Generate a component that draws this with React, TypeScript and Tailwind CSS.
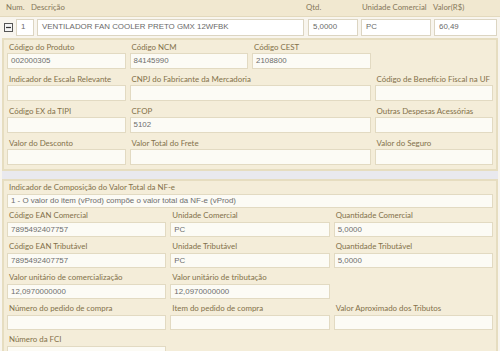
import React from "react";

const LBL = "block h-[12px] leading-[12px] text-[7.9px] text-[#83714a] whitespace-nowrap overflow-hidden pl-[2px]";
const INP = "flex items-center border border-[#e2dac2] bg-[#fcfbf5] pl-[3px] text-[7.9px] text-[#6e6e6e] whitespace-nowrap overflow-hidden";

function F1({ label, value = "", span = "" }: { label: string; value?: string; span?: string }) {
  return (
    <div className={`flex flex-col ${span}`}>
      <span className={LBL} style={{ fontFamily: "Lato, sans-serif" }}>{label}</span>
      <div className={`${INP} h-[16px] mb-[4px]`} style={{ fontFamily: "'Liberation Sans', Arial, sans-serif" }}>{value}</div>
    </div>
  );
}

function F2({ label, value = "", span = "", first = false }: { label: string; value?: string; span?: string; first?: boolean }) {
  return (
    <div className={`flex flex-col ${span}`}>
      <span className={`${LBL} h-[13px] leading-[13px]`} style={{ fontFamily: "Lato, sans-serif" }}>{label}</span>
      <div
        className={`${INP} ${first ? "h-[14px] mb-[1px]" : "h-[15px] mb-[3px]"}`}
        style={{ fontFamily: "'Liberation Sans', Arial, sans-serif" }}
      >
        {value}
      </div>
    </div>
  );
}

function Empty() {
  return <div />;
}

export default function App() {
  const arial = { fontFamily: "'Liberation Sans', Arial, sans-serif" };
  const lato = { fontFamily: "Lato, sans-serif" };
  const rowInp = "h-[17px] flex items-center border border-[#dcd5c2] bg-white pl-[4px] text-[7.9px] text-[#6a6a6a] whitespace-nowrap overflow-hidden";
  return (
    <div className="w-[500px] h-[351px] overflow-hidden bg-[#f8f5ee]">
      {/* header */}
      <div className="flex h-[17px] items-center bg-[#f1e8d0] border-b border-[#e3d9bd] text-[7.8px] text-[#85775a]" style={lato}>
        <span className="w-[31px] pl-[6px]">Num.</span>
        <span className="w-[275px]">Descrição</span>
        <span className="w-[56px]">Qtd.</span>
        <span className="w-[71px]">Unidade Comercial</span>
        <span>Valor(R$)</span>
      </div>
      {/* item row */}
      <div className="flex h-[20px] items-center" style={arial}>
        <div className="w-[16px] flex justify-center pl-[1px]">
          <svg width="9" height="9" viewBox="0 0 9 9">
            <rect x="0.5" y="0.5" width="8" height="8" fill="#f4f4f4" stroke="#555" strokeWidth="1" />
            <line x1="2" y1="4.5" x2="7" y2="4.5" stroke="#333" strokeWidth="1.2" />
          </svg>
        </div>
        <div className={`${rowInp} w-[18px]`}>1</div>
        <div className={`${rowInp} w-[267px] ml-[3px]`}>VENTILADOR FAN COOLER PRETO GMX 12WFBK</div>
        <div className={`${rowInp} w-[50px] ml-[4px]`}>5,0000</div>
        <div className={`${rowInp} w-[70px] ml-[3px]`}>PC</div>
        <div className={`${rowInp} w-[63px] ml-[3px]`}>60,49</div>
      </div>
      {/* panel 1 */}
      <div className="mx-[2px] mt-[1px] border-2 border-[#e6ddc0] bg-[#f4edd9] px-[3px] pt-[1px]">
        <div className="grid grid-cols-4 gap-x-[4px]">
          <F1 label="Código do Produto" value="002000305" />
          <F1 label="Código NCM" value="84145990" />
          <F1 label="Código CEST" value="2108800" />
          <Empty />
          <F1 label="Indicador de Escala Relevante" />
          <F1 label="CNPJ do Fabricante da Mercadoria" span="col-span-2" />
          <F1 label="Código de Benefício Fiscal na UF" />
          <F1 label="Código EX da TIPI" />
          <F1 label="CFOP" value="5102" span="col-span-2" />
          <F1 label="Outras Despesas Acessórias" />
          <F1 label="Valor do Desconto" />
          <F1 label="Valor Total do Frete" span="col-span-2" />
          <F1 label="Valor do Seguro" />
        </div>
      </div>
      <div className="h-[8px] bg-[#e9e9ee] mx-[2px]" />
      {/* panel 2 */}
      <div className="mx-[2px] border-2 border-[#e6ddc0] bg-[#f4edd9] px-[3px] h-[200px]">
        <div className="grid grid-cols-3 gap-x-[4px]">
          <F2 first label="Indicador de Composição do Valor Total da NF-e" value="1 - O valor do item (vProd) compõe o valor total da NF-e (vProd)" span="col-span-3" />
          <F2 label="Código EAN Comercial" value="7895492407757" />
          <F2 label="Unidade Comercial" value="PC" />
          <F2 label="Quantidade Comercial" value="5,0000" />
          <F2 label="Código EAN Tributável" value="7895492407757" />
          <F2 label="Unidade Tributável" value="PC" />
          <F2 label="Quantidade Tributável" value="5,0000" />
          <F2 label="Valor unitário de comercialização" value="12,0970000000" />
          <F2 label="Valor unitário de tributação" value="12,0970000000" />
          <Empty />
          <F2 label="Número do pedido de compra" />
          <F2 label="Item do pedido de compra" />
          <F2 label="Valor Aproximado dos Tributos" />
          <F2 label="Número da FCI" />
        </div>
      </div>
    </div>
  );
}
